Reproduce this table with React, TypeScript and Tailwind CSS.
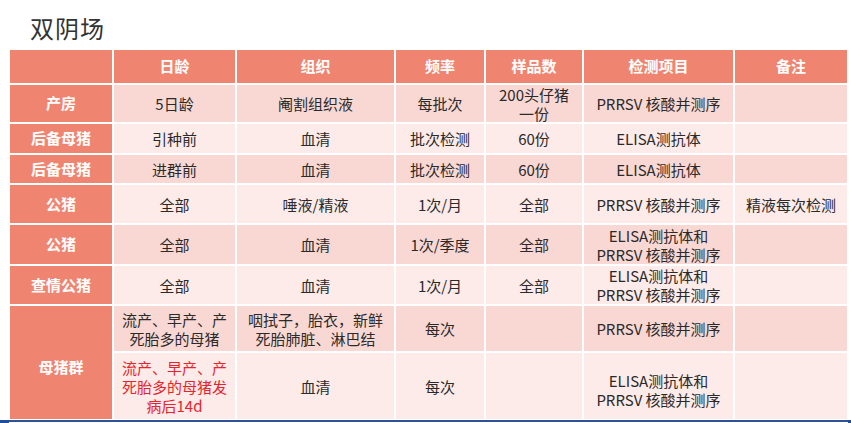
import React from "react";

type Row = {
  label?: string;
  cells: React.ReactNode[];
  tone: "dark" | "light";
  h: string;
};

const HEAD = ["", "日龄", "组织", "频率", "样品数", "检测项目", "备注"];

const ROWS: Row[] = [
  { label: "产房", cells: ["5日龄", "阉割组织液", "每批次", <>200头仔猪<br />一份</>, "PRRSV 核酸并测序", ""], tone: "dark", h: "h-[37px]" },
  { label: "后备母猪", cells: ["引种前", "血清", "批次检测", "60份", "ELISA测抗体", ""], tone: "light", h: "h-[29px]" },
  { label: "后备母猪", cells: ["进群前", "血清", "批次检测", "60份", "ELISA测抗体", ""], tone: "dark", h: "h-[28px]" },
  { label: "公猪", cells: ["全部", "唾液/精液", "1次/月", "全部", "PRRSV 核酸并测序", "精液每次检测"], tone: "light", h: "h-[38px]" },
  { label: "公猪", cells: ["全部", "血清", "1次/季度", "全部", <>ELISA测抗体和<br />PRRSV 核酸并测序</>, ""], tone: "dark", h: "h-[39px]" },
  { label: "查情公猪", cells: ["全部", "血清", "1次/月", "全部", <>ELISA测抗体和<br />PRRSV 核酸并测序</>, ""], tone: "light", h: "h-[38px]" },
];

function Cell({ tone, children, className = "" }: { tone: "dark" | "light"; children?: React.ReactNode; className?: string }) {
  return (
    <div
      className={`flex items-center justify-center text-center text-[15px] leading-[19px] text-[#2a2a2a] ${
        tone === "dark" ? "bg-[#f9d8d4]" : "bg-[#fdebe9]"
      } ${className}`}
    >
      <span>{children}</span>
    </div>
  );
}

function Label({ children, className = "" }: { children: React.ReactNode; className?: string }) {
  return (
    <div className={`flex items-center justify-center bg-[#ef8571] text-[15px] font-bold text-white ${className}`}>
      {children}
    </div>
  );
}

export default function App() {
  return (
    <div className="relative flex h-[423px] w-[851px] flex-col overflow-hidden bg-white font-['Noto_Sans_CJK_SC',sans-serif]">
      {/* title */}
      <h1 className="mt-[12px] pl-[30px] text-[24px] leading-[32px] font-normal tracking-[1px] text-[#333]">双阴场</h1>

      {/* table */}
      <div className="ml-[10px] mt-[6px] grid w-[837px] grid-cols-[102px_121px_157px_88px_96px_149px_112px] gap-[2px] bg-white">
        {HEAD.map((h, i) => (
          <div key={`h-${i}`} className="flex h-[33px] items-center justify-center bg-[#ef8571] text-[15px] font-bold text-white">
            {h}
          </div>
        ))}

        {ROWS.map((row, r) => (
          <React.Fragment key={`r-${r}`}>
            <Label className={row.h}>{row.label}</Label>
            {row.cells.map((c, i) => (
              <Cell key={`c-${r}-${i}`} tone={row.tone} className={row.h}>
                {c}
              </Cell>
            ))}
          </React.Fragment>
        ))}

        {/* 母猪群 spans two rows */}
        <Label className="row-span-2 pt-[10px]">母猪群</Label>
        <Cell tone="dark" className="h-[45px]">流产、早产、产<br />死胎多的母猪</Cell>
        <Cell tone="dark" className="h-[45px]">咽拭子，胎衣，新鲜<br />死胎肺脏、淋巴结</Cell>
        <Cell tone="dark" className="h-[45px]">每次</Cell>
        <Cell tone="dark" className="h-[45px]" />
        <Cell tone="dark" className="h-[45px]">PRRSV 核酸并测序</Cell>
        <Cell tone="dark" className="h-[45px]" />

        <Cell tone="light" className="h-[66px] !text-[#e8232c]">流产、早产、产<br />死胎多的母猪发<br />病后14d</Cell>
        <Cell tone="light" className="h-[66px]">血清</Cell>
        <Cell tone="light" className="h-[66px]">每次</Cell>
        <Cell tone="light" className="h-[66px]" />
        <Cell tone="light" className="h-[66px] pt-[8px]">ELISA测抗体和<br />PRRSV 核酸并测序</Cell>
        <Cell tone="light" className="h-[66px]" />
      </div>

      {/* bottom rule */}
      <div className="mt-[1px] flex items-start">
        <div className="h-[3px] w-[9px] bg-[#1f4e9a]" />
        <div className="h-[2px] flex-1 bg-[#2c5496]" />
        <div className="h-[3px] w-[3px] bg-[#1f4e9a]" />
      </div>
    </div>
  );
}
